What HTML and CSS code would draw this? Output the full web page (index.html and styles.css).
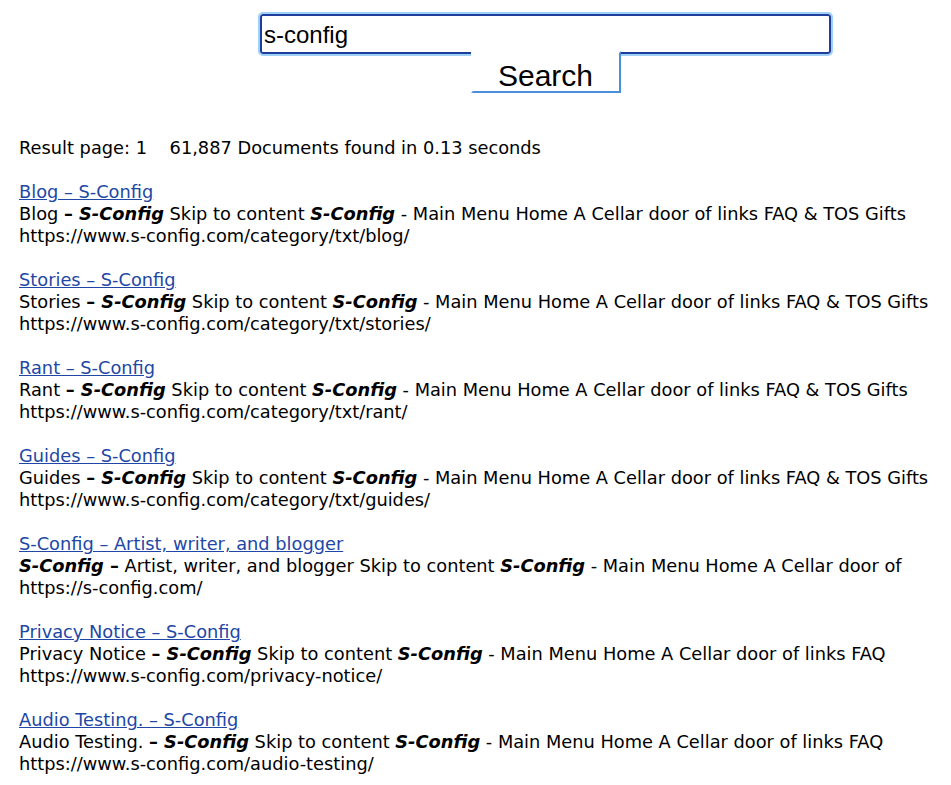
FILE: index.html
```html
<!DOCTYPE html>
<html lang="en">
<head>
  <meta charset="UTF-8">
  <title>s-config - Search</title>
  <link rel="stylesheet" href="styles.css">
</head>
<body>
  <form class="search-form">
    <input class="search-box" type="text" value="s-config">
    <button class="search-button" type="button">Search</button>
  </form>

  <div class="results">
    <p class="summary">Result page: 1&nbsp;&nbsp;&nbsp;&nbsp;61,887 Documents found in 0.13 seconds</p>

    <div class="result">
      <a href="#">Blog – S-Config</a>
      <div class="snippet">Blog <b>– <i>S-Config</i></b> Skip to content <b><i>S-Config</i></b> - Main Menu Home A Cellar door of links FAQ &amp; TOS Gifts</div>
      <div class="url">https://www.s-config.com/category/txt/blog/</div>
    </div>

    <div class="result">
      <a href="#">Stories – S-Config</a>
      <div class="snippet">Stories <b>– <i>S-Config</i></b> Skip to content <b><i>S-Config</i></b> - Main Menu Home A Cellar door of links FAQ &amp; TOS Gifts</div>
      <div class="url">https://www.s-config.com/category/txt/stories/</div>
    </div>

    <div class="result">
      <a href="#">Rant – S-Config</a>
      <div class="snippet">Rant <b>– <i>S-Config</i></b> Skip to content <b><i>S-Config</i></b> - Main Menu Home A Cellar door of links FAQ &amp; TOS Gifts</div>
      <div class="url">https://www.s-config.com/category/txt/rant/</div>
    </div>

    <div class="result">
      <a href="#">Guides – S-Config</a>
      <div class="snippet">Guides <b>– <i>S-Config</i></b> Skip to content <b><i>S-Config</i></b> - Main Menu Home A Cellar door of links FAQ &amp; TOS Gifts</div>
      <div class="url">https://www.s-config.com/category/txt/guides/</div>
    </div>

    <div class="result">
      <a href="#">S-Config – Artist, writer, and blogger</a>
      <div class="snippet"><b><i>S-Config</i> –</b> Artist, writer, and blogger Skip to content <b><i>S-Config</i></b> - Main Menu Home A Cellar door of</div>
      <div class="url">https://s-config.com/</div>
    </div>

    <div class="result">
      <a href="#">Privacy Notice – S-Config</a>
      <div class="snippet">Privacy Notice <b>– <i>S-Config</i></b> Skip to content <b><i>S-Config</i></b> - Main Menu Home A Cellar door of links FAQ</div>
      <div class="url">https://www.s-config.com/privacy-notice/</div>
    </div>

    <div class="result">
      <a href="#">Audio Testing. – S-Config</a>
      <div class="snippet">Audio Testing. <b>– <i>S-Config</i></b> Skip to content <b><i>S-Config</i></b> - Main Menu Home A Cellar door of links FAQ</div>
      <div class="url">https://www.s-config.com/audio-testing/</div>
    </div>
  </div>
</body>
</html>
```

FILE: styles.css
```css
body {
  margin: 0;
  padding: 12px 0 0 19px;
  font-family: "DejaVu Sans", Verdana, sans-serif;
  font-size: 17.8px;
  line-height: 22px;
  color: #000;
  background: #fff;
}

.search-form {
  display: flex;
  flex-direction: column;
  align-items: center;
  width: 575px;
  margin-left: 239px;
}

.search-box {
  box-sizing: border-box;
  width: 571px;
  height: 40px;
  margin: 2px;
  padding: 2px 2px 0;
  border: 2px solid #1e3d9c;
  border-radius: 3px;
  outline: 2px solid #9fd0f5;
  font-family: "Liberation Sans", Arial, sans-serif;
  font-size: 24px;
  color: #000;
}

.search-button {
  position: relative;
  width: 150px;
  height: 42px;
  margin-top: -5px;
  padding: 7px 0 0;
  background: #fff;
  border: 2px solid;
  border-color: #fff #4a8fdc #4a8fdc #fff;
  font-family: "Liberation Sans", Arial, sans-serif;
  font-size: 30px;
  line-height: 31px;
  color: #000;
}

.results {
  margin-top: 44px;
}

.summary {
  margin: 0 0 22px;
}

.result {
  margin-bottom: 22px;
  white-space: nowrap;
}

.result a {
  color: #2147a6;
  text-decoration: underline;
}
```
